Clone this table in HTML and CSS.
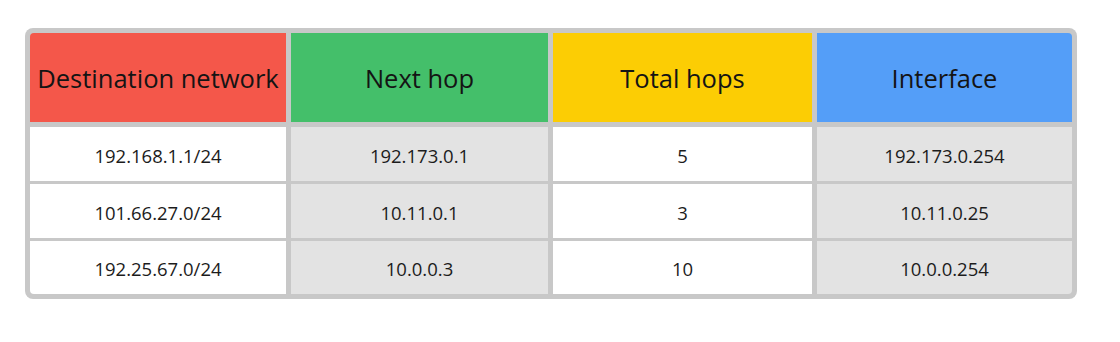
FILE: index.html
```html
<!DOCTYPE html>
<html>
<head>
<meta charset="utf-8">
<link rel="stylesheet" href="styles.css">
</head>
<body>
<div class="table">
  <div class="cell head red">Destination network</div>
  <div class="cell head green">Next hop</div>
  <div class="cell head yellow">Total hops</div>
  <div class="cell head blue">Interface</div>

  <div class="cell light">192.168.1.1/24</div>
  <div class="cell dark">192.173.0.1</div>
  <div class="cell light">5</div>
  <div class="cell dark">192.173.0.254</div>

  <div class="cell light">101.66.27.0/24</div>
  <div class="cell dark">10.11.0.1</div>
  <div class="cell light">3</div>
  <div class="cell dark">10.11.0.25</div>

  <div class="cell light">192.25.67.0/24</div>
  <div class="cell dark">10.0.0.3</div>
  <div class="cell light">10</div>
  <div class="cell dark">10.0.0.254</div>
</div>
</body>
</html>
```
FILE: styles.css
```css
html, body {
  margin: 0;
  background: #ffffff;
}
body {
  padding: 28px 0 0 25px;
  font-family: "Open Sans", "Liberation Sans", sans-serif;
}
.table {
  display: grid;
  width: 1052px;
  box-sizing: border-box;
  grid-template-columns: 256px 257px 259px 255px;
  grid-template-rows: 91px 54px 54px 53px;
  column-gap: 5px;
  row-gap: 3px;
  padding: 5px;
  background: #c8c8c8;
  border-radius: 8px;
}
.cell {
  display: flex;
  align-items: center;
  justify-content: center;
  color: #1c1c1c;
  font-size: 18.5px;
  padding-top: 2px;
  white-space: nowrap;
}
.head {
  margin-bottom: 2px;
  font-size: 25.5px;
  color: #141414;
  padding-top: 0;
}
.red { background: #f4574a; border-top-left-radius: 4px; }
.green { background: #44bf6a; }
.yellow { background: #fccd04; }
.blue { background: #549ef8; border-top-right-radius: 4px; }
.light { background: #ffffff; }
.dark { background: #e3e3e3; }
.table .cell:nth-child(13) { border-bottom-left-radius: 4px; }
.table .cell:nth-child(16) { border-bottom-right-radius: 4px; }
```
